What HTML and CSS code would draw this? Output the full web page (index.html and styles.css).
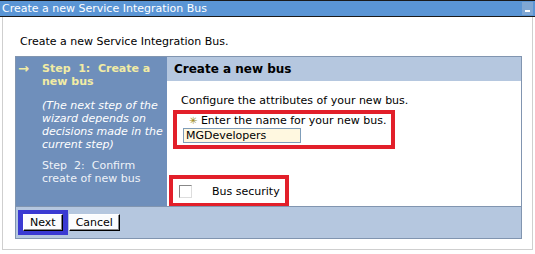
FILE: index.html
```html
<!DOCTYPE html>
<html lang="en">
<head>
	<meta charset="utf-8">
	<title>Create a new Service Integration Bus</title>
	<link rel="stylesheet" href="styles.css">
</head>
<body>
	<div class="titlebar">
		<span>Create a new Service Integration Bus</span>
		<span class="minimize"></span>
	</div>
	<div class="panel">
		<p class="intro">Create a new Service Integration Bus.</p>
		<div class="wizard">
			<div class="steps">
				<div class="step current">
					<span class="arrow">&rarr;</span>
					<span>Step&nbsp; 1:&nbsp; Create a new bus</span>
				</div>
				<div class="step note">
					<span class="arrow"></span>
					<span>(The next step of the wizard depends on decisions made in the current step)</span>
				</div>
				<div class="step later">
					<span class="arrow"></span>
					<span>Step&nbsp; 2:&nbsp; Confirm create of new bus</span>
				</div>
			</div>
			<div class="main">
				<div class="main_head">Create a new bus</div>
				<div class="main_body">
					<p class="lead">Configure the attributes of your new bus.</p>
					<div class="mark name_box">
						<div class="label"><span class="req">&#10035;</span> Enter the name for your new bus.</div>
						<input type="text" class="txt" value="MGDevelopers">
					</div>
					<div class="mark sec_box">
						<span class="chk"></span>
						<span>Bus security</span>
					</div>
				</div>
			</div>
			<div class="buttons">
				<span class="focus"><button class="btn">Next</button></span>
				<button class="btn">Cancel</button>
			</div>
		</div>
	</div>
</body>
</html>
```
FILE: styles.css
```css
body {
	margin: 0;
	font-family: "DejaVu Sans", Verdana, sans-serif;
	font-size: 11px;
	line-height: 13px;
	color: #000;
	background: #fff;
}
.titlebar {
	height: 15px;
	background: #5a95d5;
	border-top: 1px solid #1a1a1a;
	border-bottom: 1px solid #1a1a1a;
	color: #fff;
	padding-left: 2px;
	line-height: 15px;
	display: flex;
	justify-content: space-between;
	align-items: center;
}
.minimize {
	width: 11px;
	height: 13px;
	background: #7fa7d4;
	margin-right: 2px;
	position: relative;
}
.minimize::after {
	content: "";
	position: absolute;
	left: 3px;
	right: 3px;
	top: 8px;
	height: 2px;
	background: #fff;
}
.panel {
	margin: 0 2px 0 2px;
	height: 233px;
	border: 1px solid #cfcfcf;
	border-top: none;
	box-sizing: border-box;
	width: 531px;
}
.intro {
	margin: 0;
	padding: 18px 0 0 17px;
	height: 21px;
}
.wizard {
	margin-left: 12px;
	width: 505px;
	border: 1px solid #8195b0;
	display: grid;
	grid-template-columns: 151px 1fr;
	grid-template-rows: 149px 32px;
}
.steps {
	background: #6f8fbb;
	color: #fff;
	padding-top: 5px;
}
.step {
	display: flex;
	margin-bottom: 10px;
}
.step .arrow {
	width: 24px;
	flex: none;
	padding-left: 2px;
	font-weight: bold;
	font-size: 13px;
}
.step.current {
	color: #f2eca4;
	font-weight: bold;
	margin-bottom: 11px;
}
.step.note {
	font-style: italic;
	padding-right: 2px;
	margin-bottom: 8px;
}
.step.later {
	color: #eef2f8;
}
.main {
	display: flex;
	flex-direction: column;
}
.main_head {
	background: #b5c7df;
	font-weight: bold;
	font-size: 12px;
	height: 24px;
	line-height: 24px;
	padding-left: 7px;
}
.main_body {
	flex: 1;
	padding: 13px 0 0 1px;
}
.lead {
	margin: 0 0 3px 13px;
}
.mark {
	border: 4px solid #e21f2a;
}
.name_box {
	width: 208px;
	height: 31px;
	margin-left: 5px;
	padding-left: 6px;
}
.label {
	padding-left: 6px;
}
.req {
	color: #9a8a20;
	font-size: 10px;
}
.txt {
	display: block;
	width: 118px;
	height: 15px;
	box-sizing: border-box;
	border: 1px solid #7f9db9;
	background: #fff8e0;
	font: inherit;
	padding: 0 2px;
	margin-top: 1px;
}
.sec_box {
	width: 112px;
	height: 24px;
	margin-top: 26px;
	margin-left: 1px;
	display: flex;
	align-items: center;
}
.chk {
	width: 11px;
	height: 11px;
	border: 1px solid #888;
	border-right-color: #ddd;
	border-bottom-color: #ddd;
	margin: 0 20px 0 6px;
}
.buttons {
	grid-column: 1 / 3;
	background: #b5c7df;
	border-top: 1px solid #8195b0;
	display: flex;
	align-items: center;
	padding-left: 2px;
}
.focus {
	background: #3a3ad2;
	padding: 4px 5px;
	display: flex;
}
.btn {
	font: inherit;
	background: #fbfcfe;
	border: 1px solid #000;
	border-left-color: #fff;
	border-top-color: #fff;
	box-shadow: inset -1px -1px 0 #888;
	height: 17px;
	padding: 0 6px;
	margin: 0;
}
.buttons > .btn {
	margin-left: 1px;
}
```
